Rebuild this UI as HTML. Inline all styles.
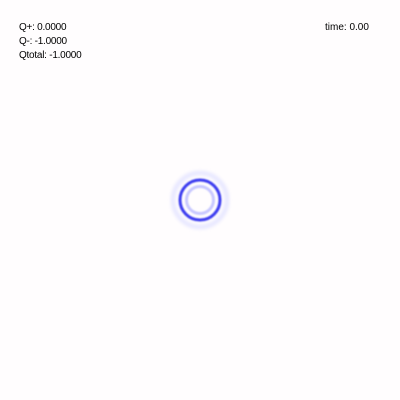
<!DOCTYPE html>
<html><head><style>
body{margin:0;width:400px;height:400px;background:#fffdfe;position:relative;overflow:hidden;font-family:"Liberation Sans",sans-serif;font-size:10px;letter-spacing:-0.25px;color:#000}
.t{position:absolute;left:19px;line-height:14px;top:21px}
.tm{position:absolute;left:325px;top:21px;line-height:14px;letter-spacing:0}
</style></head><body>
<div class="t">Q+: 0.0000<br>Q-: -1.0000<br>Qtotal: -1.0000</div>
<div class="tm">time: 0.00</div>
<svg width="400" height="400" style="position:absolute;left:0;top:0">
<defs><filter id="b"><feGaussianBlur stdDeviation="0.7"/></filter><filter id="b2"><feGaussianBlur stdDeviation="1.8"/></filter></defs>
<circle cx="200" cy="200" r="27" fill="none" stroke="#e4e4ff" stroke-width="4" filter="url(#b2)"/>
<circle cx="200" cy="200" r="13.5" fill="none" stroke="#c8c8ff" stroke-width="3" filter="url(#b)"/>
<circle cx="200" cy="200" r="20" fill="none" stroke="#3a3af0" stroke-width="3" filter="url(#b)"/>
</svg>
</body></html>
